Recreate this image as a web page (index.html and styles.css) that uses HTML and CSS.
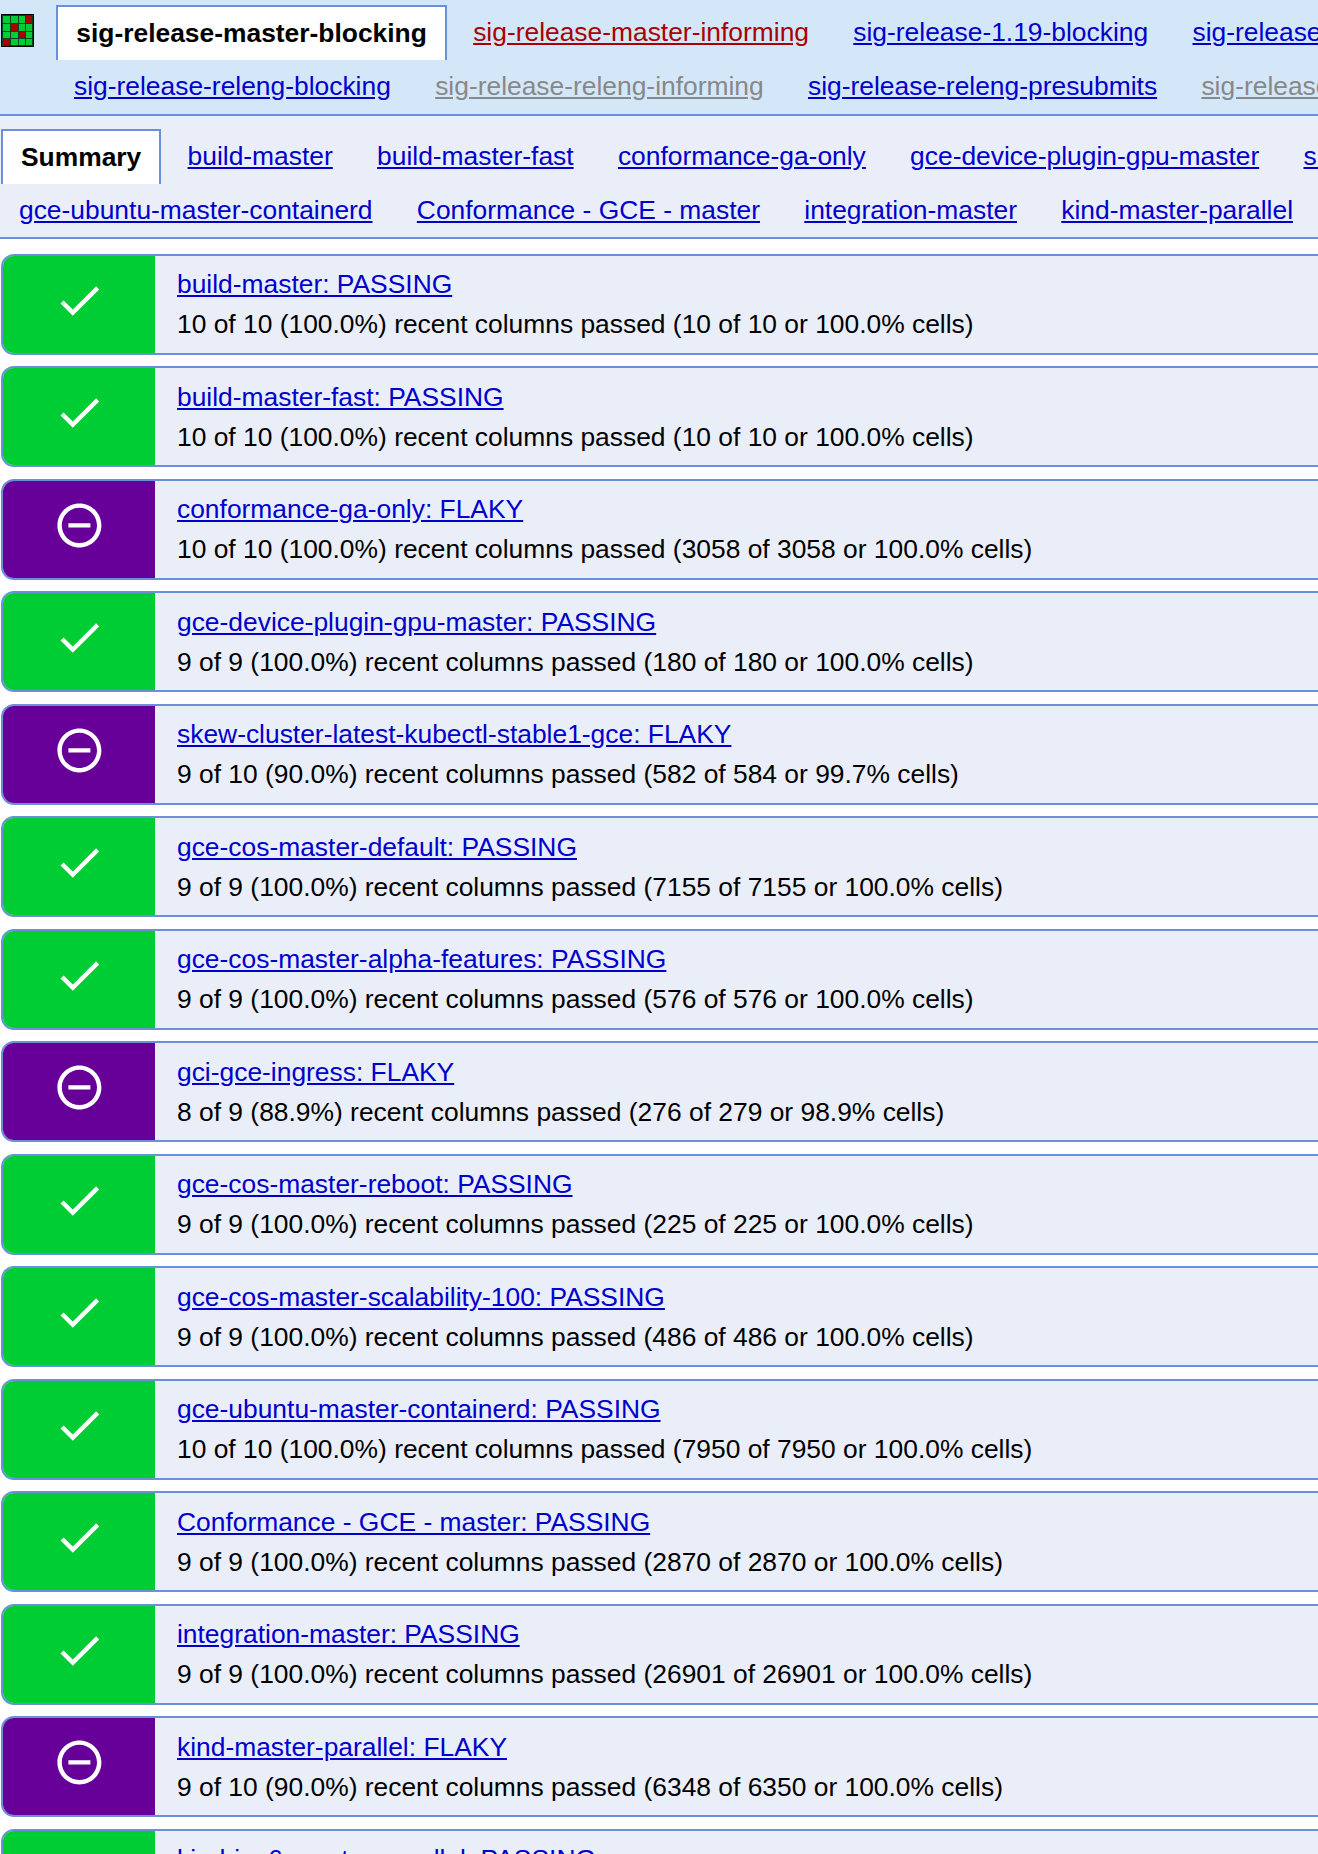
FILE: index.html
```html
<!DOCTYPE html>
<html>
<head>
  <meta charset="utf-8">
  <title>TestGrid</title>
  <link rel="stylesheet" href="styles.css">
</head>
<body>
  <div class="dashboards">
    <div class="tab-row">
      <svg class="logo" viewBox="0 0 33 33" aria-hidden="true">
        <rect width="33" height="33" fill="#000"/>
        <rect x="1" y="1" width="31" height="31" fill="#042"/>
        <g fill="#0c3">
          <rect x="2" y="2" width="7" height="7"/><rect x="10" y="2" width="7" height="7"/><rect x="18" y="2" width="6" height="7"/>
          <rect x="2" y="10" width="7" height="7"/><rect x="18" y="10" width="6" height="7"/><rect x="25" y="10" width="6" height="7"/>
          <rect x="2" y="18" width="7" height="6"/><rect x="10" y="18" width="7" height="6"/><rect x="25" y="18" width="6" height="6"/>
          <rect x="10" y="25" width="7" height="6"/><rect x="18" y="25" width="6" height="6"/><rect x="25" y="25" width="6" height="6"/>
        </g>
        <g fill="#a00">
          <rect x="25" y="2" width="6" height="7"/><rect x="10" y="10" width="7" height="7"/>
          <rect x="18" y="18" width="6" height="6"/><rect x="2" y="25" width="7" height="6"/>
        </g>
      </svg>
      <a class="tab active">sig-release-master-blocking</a>
      <a class="tab failing" href="#">sig-release-master-informing</a>
      <a class="tab" href="#">sig-release-1.19-blocking</a>
      <a class="tab" href="#">sig-release-1.19-informing</a>
    </div>
    <div class="tab-row lower">
      <a class="tab" href="#">sig-release-releng-blocking</a>
      <a class="tab stale" href="#">sig-release-releng-informing</a>
      <a class="tab" href="#">sig-release-releng-presubmits</a>
      <a class="tab stale" href="#">sig-release-orphaned</a>
    </div>
  </div>

  <div class="dashboard-tabs">
    <div class="tab-row">
      <a class="tab active">Summary</a>
      <a class="tab" href="#">build-master</a>
      <a class="tab" href="#">build-master-fast</a>
      <a class="tab" href="#">conformance-ga-only</a>
      <a class="tab" href="#">gce-device-plugin-gpu-master</a>
      <a class="tab" href="#">skew-cluster-latest-kubectl-stable1-gce</a>
    </div>
    <div class="tab-row lower">
      <a class="tab" href="#">gce-ubuntu-master-containerd</a>
      <a class="tab" href="#">Conformance - GCE - master</a>
      <a class="tab" href="#">integration-master</a>
      <a class="tab" href="#">kind-master-parallel</a>
    </div>
  </div>

  <div class="summary" id="summary"></div>

  <script>
    // name, status, columns passed, columns total, column %, cells passed, cells total, cell %
    const rows = [
      ['build-master', 'PASSING', 10, 10, '100.0', 10, 10, '100.0'],
      ['build-master-fast', 'PASSING', 10, 10, '100.0', 10, 10, '100.0'],
      ['conformance-ga-only', 'FLAKY', 10, 10, '100.0', 3058, 3058, '100.0'],
      ['gce-device-plugin-gpu-master', 'PASSING', 9, 9, '100.0', 180, 180, '100.0'],
      ['skew-cluster-latest-kubectl-stable1-gce', 'FLAKY', 9, 10, '90.0', 582, 584, '99.7'],
      ['gce-cos-master-default', 'PASSING', 9, 9, '100.0', 7155, 7155, '100.0'],
      ['gce-cos-master-alpha-features', 'PASSING', 9, 9, '100.0', 576, 576, '100.0'],
      ['gci-gce-ingress', 'FLAKY', 8, 9, '88.9', 276, 279, '98.9'],
      ['gce-cos-master-reboot', 'PASSING', 9, 9, '100.0', 225, 225, '100.0'],
      ['gce-cos-master-scalability-100', 'PASSING', 9, 9, '100.0', 486, 486, '100.0'],
      ['gce-ubuntu-master-containerd', 'PASSING', 10, 10, '100.0', 7950, 7950, '100.0'],
      ['Conformance - GCE - master', 'PASSING', 9, 9, '100.0', 2870, 2870, '100.0'],
      ['integration-master', 'PASSING', 9, 9, '100.0', 26901, 26901, '100.0'],
      ['kind-master-parallel', 'FLAKY', 9, 10, '90.0', 6348, 6350, '100.0'],
      ['kind-ipv6-master-parallel', 'PASSING', 9, 9, '100.0', 6350, 6350, '100.0']
    ];

    const icons = {
      PASSING: 'M9 16.17L4.83 12l-1.42 1.41L9 19 21 7l-1.41-1.41z',
      FLAKY: 'M7 11v2h10v-2H7zm5-9C6.48 2 2 6.48 2 12s4.48 10 10 10 10-4.48 10-10S17.52 2 12 2zm0 18c-4.41 0-8-3.59-8-8s3.59-8 8-8 8 3.59 8 8-3.59 8-8 8z'
    };

    document.getElementById('summary').innerHTML = rows.map(r => `
      <div class="card">
        <div class="status ${r[1].toLowerCase()}">
          <svg viewBox="0 0 24 24" aria-hidden="true"><path d="${icons[r[1]]}"/></svg>
        </div>
        <div class="info">
          <a class="title" href="#">${r[0]}: ${r[1]}</a>
          <div>${r[2]} of ${r[3]} (${r[4]}%) recent columns passed (${r[5]} of ${r[6]} or ${r[7]}% cells)</div>
        </div>
      </div>`).join('');
  </script>
</body>
</html>
```

FILE: styles.css
```css
html,
body {
  height: 100vh;
  overflow: hidden;
}

body {
  margin: 0;
  font-family: "Liberation Sans", Arial, sans-serif;
  font-size: 26.4px;
  line-height: 30.3px;
  color: #000;
  background: #fff;
}

a {
  color: #00c;
}

.dashboards {
  background: #d4e7f8;
  border-bottom: 2px solid #6b90da;
  padding: 5px 0 0;
}

.dashboards .lower {
  padding-left: 57px;
  height: 54px;
}

.dashboard-tabs {
  background: #e9eef9;
  border-bottom: 2px solid #6b90da;
  padding: 13px 0 0 1px;
}

.dashboard-tabs .lower {
  padding-left: 1px;
  height: 53px;
}

.tab-row {
  display: flex;
  align-items: flex-start;
  gap: 10.3px;
  white-space: nowrap;
  height: 55px;
  overflow: hidden;
}

.logo {
  flex: none;
  width: 33px;
  height: 33px;
  margin: 9px 12px 0 1px;
}

.tab {
  flex: none;
  padding: 11px 17px;
}

.tab.active {
  padding: 11px 18px 14px;
  margin-right: -1px;
  border: 2px solid #6b90da;
  border-bottom: none;
  background: #fff;
  color: #000;
  font-weight: bold;
}

.active ~ .tab {
  padding-top: 12px;
}

.tab.failing {
  color: #a00;
}

.tab.stale {
  color: #888;
}

.summary {
  display: flex;
  flex-direction: column;
  gap: 11.5px;
  margin: 14.9px 0 0 1px;
}

.card {
  display: flex;
  width: 1360px;
  height: 101px;
  box-sizing: border-box;
  flex: none;
  border: 2px solid #6b90da;
  border-radius: 13px;
  background: #e9eef9;
  overflow: hidden;
}

.status {
  flex: none;
  width: 152px;
  box-sizing: border-box;
  padding-top: 18px;
  text-align: center;
}

.status.passing {
  background: #0c3;
}

.status.flaky {
  background: #609;
}

.status svg {
  width: 52.8px;
  height: 52.8px;
  fill: #fff;
}

.info {
  padding: 13.2px 22px;
}

.title {
  display: block;
  margin-bottom: 9.9px;
}
```
